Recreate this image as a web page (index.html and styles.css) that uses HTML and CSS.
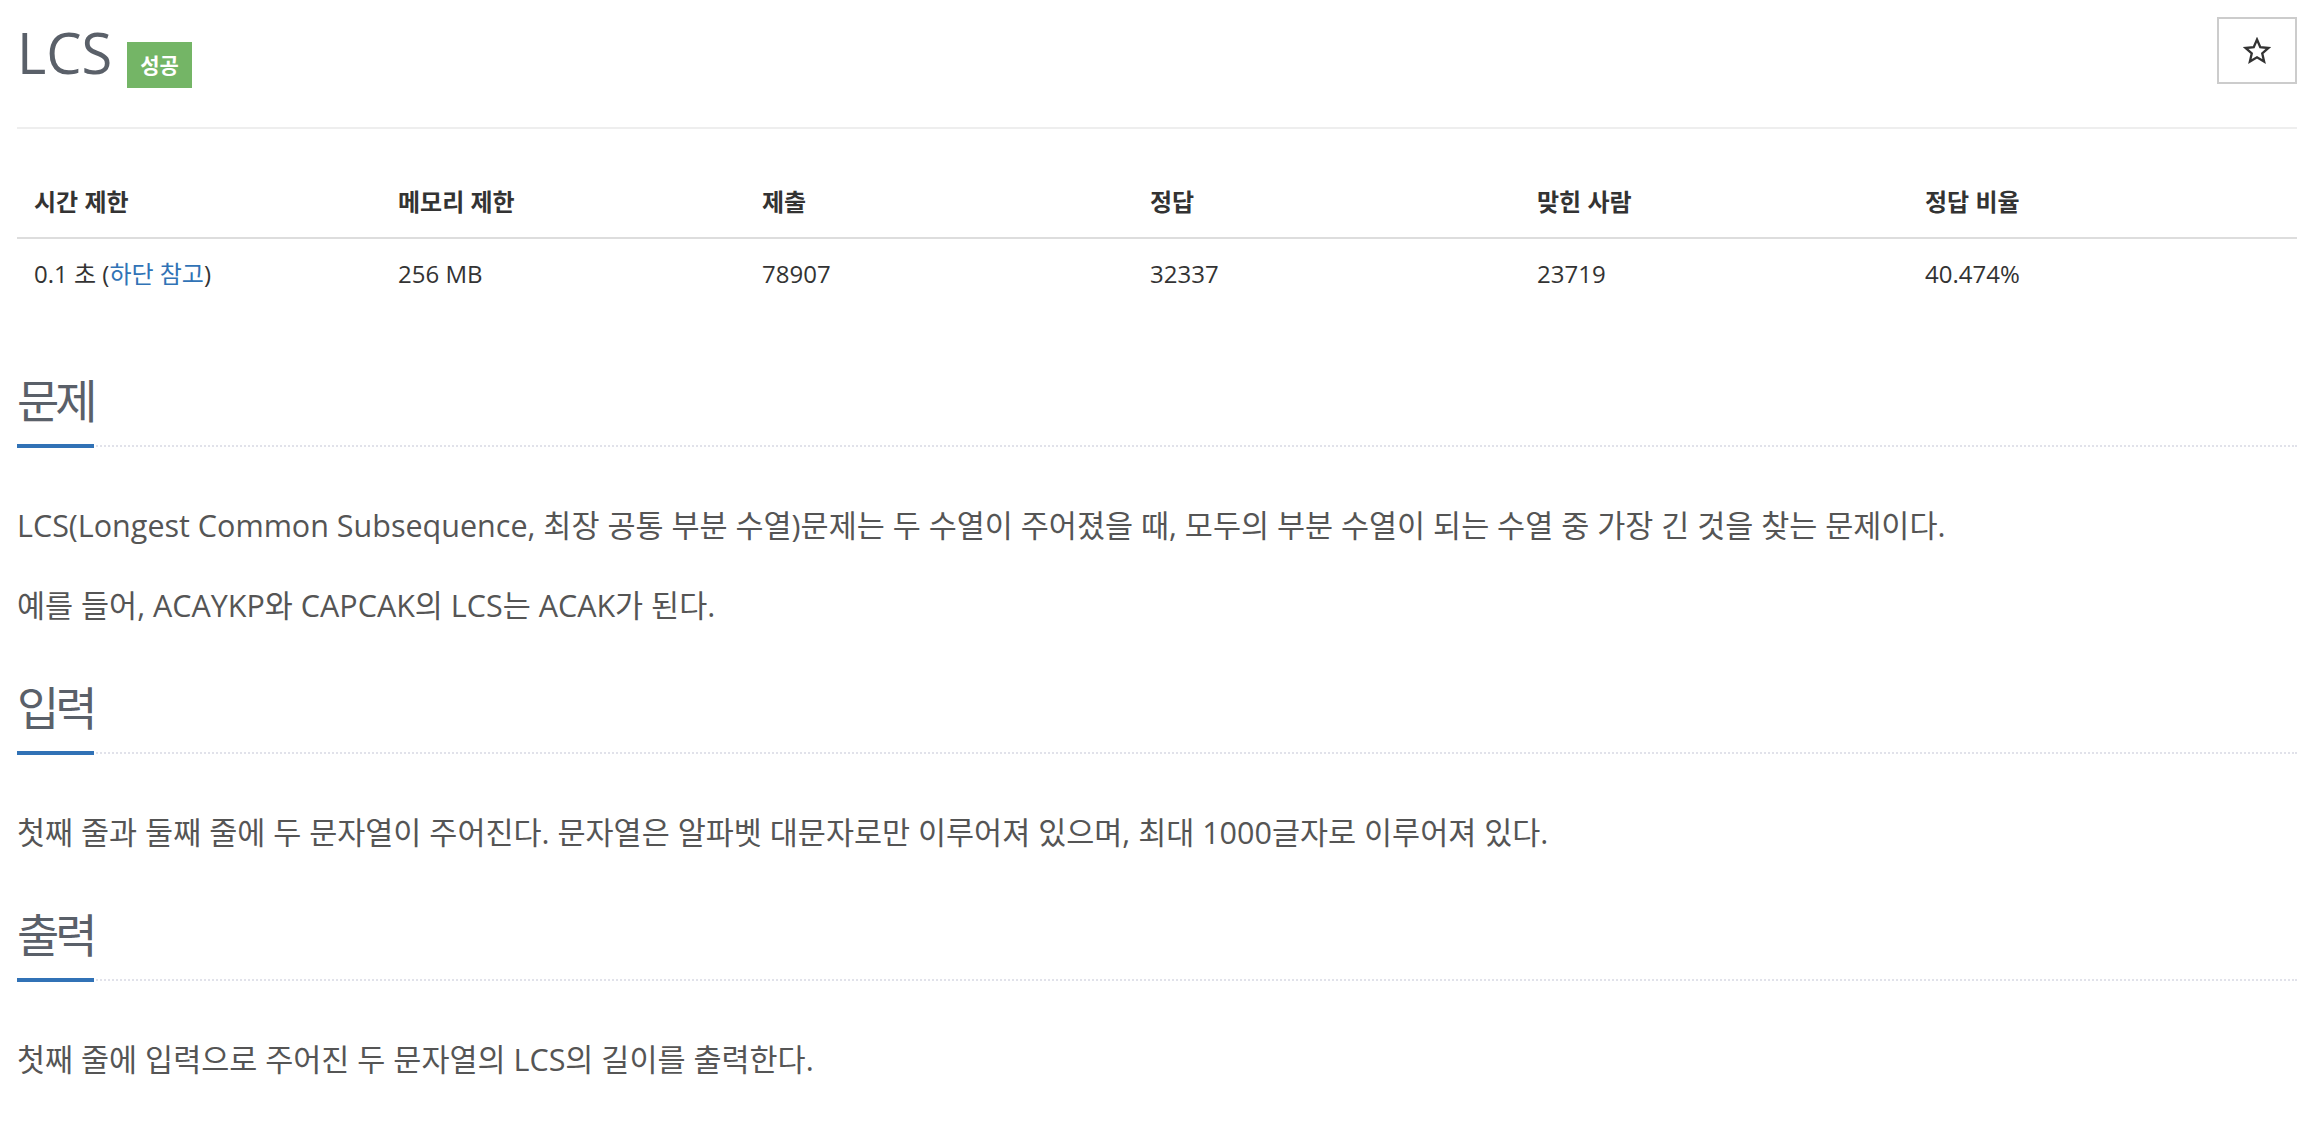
FILE: index.html
```html
<!DOCTYPE html>
<html lang="ko">
<head>
<meta charset="utf-8">
<title>LCS</title>
<link rel="stylesheet" href="styles.css">
</head>
<body>
<div class="page">
  <div class="page-header">
    <h1 class="title"><span class="title-text">LCS</span><span class="badge">성공</span></h1>
    <button class="star" type="button" aria-label="즐겨찾기">
      <svg width="28" height="28" viewBox="0 0 24 24"><polygon points="12,2.2 14.8,8.7 21.8,9.4 16.5,14.1 18.1,21 12,17.4 5.9,21 7.5,14.1 2.2,9.4 9.2,8.7" fill="none" stroke="#333" stroke-width="2" stroke-linejoin="miter"/></svg>
    </button>
  </div>

  <table class="info">
    <thead>
      <tr><th class="w1">시간 제한</th><th class="w2">메모리 제한</th><th class="w3">제출</th><th class="w4">정답</th><th class="w5">맞힌 사람</th><th class="w6">정답 비율</th></tr>
    </thead>
    <tbody>
      <tr><td>0.1 초 (<a href="#limit">하단 참고</a>)</td><td>256 MB</td><td>78907</td><td>32337</td><td>23719</td><td>40.474%</td></tr>
    </tbody>
  </table>

  <section class="section">
    <h2 class="headline"><span>문제</span></h2>
    <div class="text">
      <p>LCS(Longest Common Subsequence, 최장 공통 부분 수열)문제는 두 수열이 주어졌을 때, 모두의 부분 수열이 되는 수열 중 가장 긴 것을 찾는 문제이다.</p>
      <p>예를 들어, ACAYKP와 CAPCAK의 LCS는 ACAK가 된다.</p>
    </div>
  </section>

  <section class="section">
    <h2 class="headline"><span>입력</span></h2>
    <div class="text">
      <p>첫째 줄과 둘째 줄에 두 문자열이 주어진다. 문자열은 알파벳 대문자로만 이루어져 있으며, 최대 1000글자로 이루어져 있다.</p>
    </div>
  </section>

  <section class="section">
    <h2 class="headline"><span>출력</span></h2>
    <div class="text">
      <p>첫째 줄에 입력으로 주어진 두 문자열의 LCS의 길이를 출력한다.</p>
    </div>
  </section>
</div>
</body>
</html>
```

FILE: styles.css
```css
* { box-sizing: border-box; }

html, body {
  margin: 0;
  padding: 0;
  background: #fff;
}

body {
  font-family: "Open Sans", "Noto Sans CJK KR", sans-serif;
  color: #333;
}

.page {
  padding: 0 23px 0 17px;
}

.page-header {
  display: flex;
  justify-content: space-between;
  align-items: flex-start;
  padding-bottom: 39px;
  border-bottom: 2px solid #eee;
}

.title {
  display: flex;
  align-items: flex-start;
  gap: 15px;
  margin: 21px 0 0 0;
  font-size: 56px;
  line-height: 62px;
  font-weight: 400;
  color: #5a6069;
}

.badge {
  display: inline-flex;
  align-items: center;
  justify-content: center;
  height: 46px;
  margin-top: 21px;
  padding: 0 13px;
  background: #74b566;
  color: #fff;
  font-size: 21px;
  line-height: 1;
  font-weight: 700;
}

.star {
  width: 80px;
  height: 67px;
  margin-top: 17px;
  padding: 0;
  border: 2px solid #ccc;
  background: #fff;
  display: flex;
  align-items: center;
  justify-content: center;
  cursor: pointer;
}

.info {
  width: 100%;
  margin-top: 38px;
  border-collapse: collapse;
  table-layout: fixed;
  font-size: 24px;
}

.info .w1 { width: 364px; }
.info .w2 { width: 364px; }
.info .w3 { width: 388px; }
.info .w4 { width: 387px; }
.info .w5 { width: 388px; }
.info .w6 { width: auto; }

.info th,
.info td {
  padding: 18px 17px;
  line-height: 34px;
  text-align: left;
  white-space: nowrap;
}

.info th {
  font-weight: 700;
  border-bottom: 2px solid #ddd;
}

.info a {
  color: #3173b6;
  text-decoration: none;
}

.section {
  margin-top: 66px;
}

.section + .section {
  margin-top: 55px;
}

.headline {
  margin: 0;
  font-size: 46px;
  line-height: 50px;
  font-weight: 400;
  letter-spacing: -4px;
  color: #5a6069;
  border-bottom: 2px dotted #e1e2ea;
}

.headline span {
  display: inline-block;
  padding-bottom: 19px;
  margin-bottom: -3px;
  border-bottom: 4px solid #3172b6;
}

.text {
  padding-top: 56px;
  font-size: 30.5px;
  line-height: 44px;
  color: #555;
}

.text p {
  margin: 0 0 36px 0;
}
```
